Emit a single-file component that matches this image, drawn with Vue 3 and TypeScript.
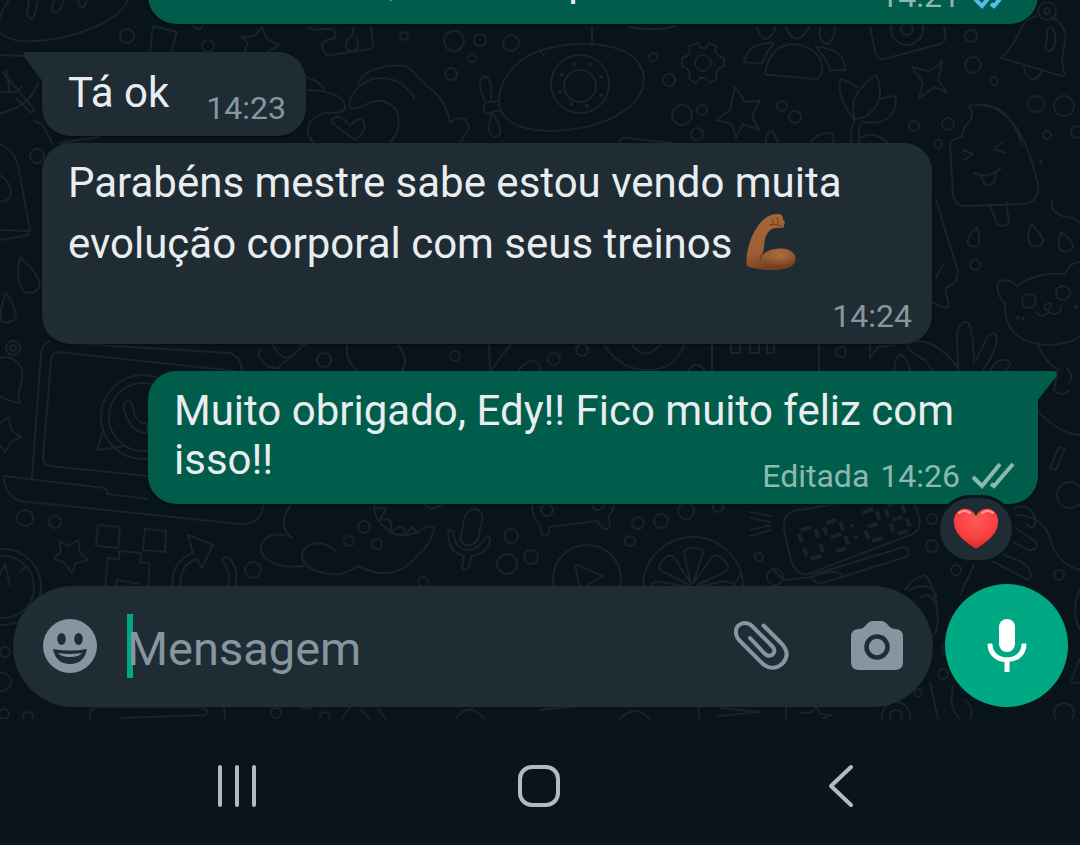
<script setup lang="ts">
import { ref } from 'vue'

const draft = ref('')

// Wallpaper bubbles: centre x, centre y, radius
const dots: [number, number, number][] = [
  [127, 36, 7], [208, 46, 6], [198, 24, 5], [404, 36, 4], [454, 41, 10], [480, 40, 6], [472, 58, 4],
  [511, 43, 8], [451, 74, 6], [580, 84, 29], [580, 86, 16], [703, 63, 8], [653, 57, 4], [669, 80, 6],
  [682, 115, 10], [702, 110, 5], [697, 134, 6], [782, 106, 5], [795, 117, 6], [914, 126, 5],
  [948, 124, 6], [938, 144, 4], [971, 36, 6], [973, 65, 8], [994, 81, 4], [1036, 104, 8],
  [1064, 106, 10], [1047, 135, 4], [1077, 132, 6], [907, 29, 16], [907, 29, 6], [1047, 11, 9],
  [1047, 11, 3], [37, 156, 7], [975, 265, 5], [1029, 301, 7], [1063, 293, 7], [841, 352, 5],
  [324, 360, 7], [455, 356, 5], [554, 359, 6], [582, 350, 6], [13, 348, 7], [13, 348, 3],
  [143, 417, 42], [143, 417, 34], [25, 518, 8], [55, 522, 6], [253, 570, 8], [364, 527, 6],
  [349, 541, 5], [377, 544, 5], [423, 582, 5], [511, 536, 7], [507, 564, 10], [531, 557, 7],
  [630, 541, 5], [638, 523, 6], [661, 521, 7], [686, 511, 8], [718, 507, 5], [547, 510, 6],
  [598, 504, 6], [587, 579, 34], [693, 587, 50], [3, 587, 38], [3, 587, 31], [759, 557, 4],
  [775, 577, 8], [932, 519, 5], [932, 546, 6], [956, 570, 5], [1059, 575, 5], [1070, 495, 13],
  [5, 652, 5], [2, 682, 9], [4, 714, 5], [28, 717, 5], [276, 713, 5], [325, 717, 5], [943, 674, 5],
  [918, 693, 4], [896, 716, 14], [896, 716, 6], [1064, 713, 10], [575, 64, 1], [591, 64, 1],
  [562, 75, 1], [601, 77, 1], [560, 92, 1], [601, 95, 1], [571, 104, 1], [587, 106, 1],
  [1018, 318, 1], [1023, 319, 1], [1076, 307, 1], [1041, 162, 1],
]

const doodles: string[] = [
  // balloon and folded shapes, top left
  'M0 33C12 43 30 43 60 38C96 30 122 16 128 0M29 0L27 14Q31 23 35 14L38 0M54 0L52 9Q55 17 60 9L64 0M78 0Q79 9 84 7L87 0M0 18Q2 9 9 0',
  'M150 53L153 26L177 32L171 53M244 53L248 43L241 37L254 36L262 27L267 39L279 45L266 53',
  'M308 27Q314 31 322 29L333 29Q336 33 335 38Q322 40 322 46Q324 57 331 55L370 49Q374 48 373 45L371 27M354 27L352 36Q343 43 347 49Q353 53 358 48L357 37',
  'M0 55L24 56M2 72L33 108Q37 113 30 112L16 98M0 92L17 92L22 86M6 70L10 92M0 113Q28 108 38 84M34 121L42 124L52 143M60 143L98 137',
  // wave and heart
  'M306 77Q320 82 324 89M308 90C335 90 347 100 345 108C342 115 330 112 325 113C308 118 303 130 313 142M358 84C362 70 385 64 405 66C415 70 420 82 430 88C442 98 448 110 450 122C462 114 470 120 468 130L460 143M414 98C405 82 390 76 372 79C358 84 345 100 351 108C360 112 370 98 382 101C400 105 405 125 390 143',
  'M355 140L343 131Q326 120 334 118Q342 114 350 126Q358 116 363 121Q368 130 355 140Z',
  // sweet with bow
  'M499 100C499 78 520 55 545 49C590 38 640 44 644 78C644 110 600 130 550 131C520 130 499 122 499 100ZM491 98Q493 80 485 76Q474 82 486 102L499 101M486 102Q480 111 487 114L500 110M492 114Q485 133 494 137Q507 135 493 114M592 27L592 42M540 50L544 56M630 27Q655 32 675 26',
  // cog
  'M698 43L701 48H706L709 43L716 46L715 52L719 56L724 58V66L718 69L716 74L717 79L710 83L706 78H700L696 83L689 79L690 73L687 69L682 66V58L687 56L690 52L689 46Z',
  'M735 87L745 102L760 101L752 116L759 130L743 124L736 138L732 124L716 120L730 110Z',
  // group of people
  'M757 27Q760 38 766 39Q774 36 775 27M786 27Q796 51 809 27M820 27Q818 43 828 44Q836 36 835 27M765 73Q770 44 795 44Q825 50 822 72Q820 79 815 79L770 75Q764 75 765 73ZM744 62Q748 42 774 43Q766 52 762 64ZM816 47Q845 48 845 70L830 70Q828 60 816 47Z',
  'M870 27L876 55Q878 60 884 59L940 44Q948 42 944 27M912 67L927 71Q931 72 942 61L938 80L947 92L934 87L919 98L923 83Z',
  // tulip
  'M854 119Q835 95 841 79Q850 82 857 87M855 119Q846 95 876 75Q888 100 865 117ZM880 99Q890 95 896 97Q896 127 863 122M852 143Q849 128 856 119M860 143Q857 130 862 122M860 138Q875 130 888 143M619 143Q620 137 628 138L672 143M766 143Q766 130 773 131L778 143M810 143Q820 130 833 134Q835 138 832 143',
  // bell
  'M1036 16C1018 20 1022 40 1001 58L1062 76Q1066 76 1064 72C1058 50 1070 42 1064 30Q1060 20 1052 18M1024 67Q1025 78 1033 79Q1040 78 1041 71M1047 30Q1052 24 1055 34Q1056 50 1049 51Q1043 50 1047 40Z',
  // ice lolly
  'M968 106Q985 103 1000 110C1018 122 1030 150 1038 185Q1040 200 1025 204L965 206Q955 206 953 195L950 143Q954 138 962 137Q962 128 970 121Q975 112 968 106M990 204L996 222Q1003 230 1009 222L1006 202M985 104Q1014 114 1022 145M963 150L973 154L964 160M1003 142L994 149L1005 153M974 173Q988 180 1001 168M981 176Q984 188 992 184Q998 178 994 172',
  'M936 200L957 268Q960 280 950 286Q944 288 946 292L949 306Q947 311 932 302M943 264L936 278M977 227Q964 240 969 245Q975 249 979 244Q980 238 977 227ZM1031 224Q1025 240 1032 246Q1041 248 1043 241Q1042 234 1031 224ZM1061 232Q1056 246 1062 251Q1071 253 1073 246Q1072 240 1061 232ZM1053 200Q1048 210 1062 216Q1072 216 1080 223',
  // cat
  'M1005 304C998 298 995 283 1000 281Q1010 278 1017 286Q1035 272 1065 274Q1070 262 1080 262M1005 302C1003 330 1020 345 1050 345Q1070 344 1080 336M1044 306Q1048 302 1052 304Q1051 310 1046 310ZM1036 312Q1042 320 1048 312Q1060 318 1061 306M1038 346Q1045 362 1058 370L1054 390Q1062 398 1070 390M1067 368Q1074 376 1069 383',
  // hand
  'M957 367C945 350 925 335 908 344Q905 350 925 360L933 371M958 370L957 335Q960 320 967 322Q973 325 974 363M976 360L988 336Q995 330 997 338Q996 352 983 370M990 370Q1000 355 1010 362Q1011 366 1005 371M894 371Q895 355 901 355Q908 357 910 371M870 344L870 358L878 347L895 345',
  'M0 144Q14 150 18 165L30 230Q30 235 24 236L0 240M0 230L29 231M0 175Q14 185 10 197Q5 203 0 201M20 257Q15 280 24 292Q35 295 40 286Q40 275 20 257ZM6 293Q-2 312 2 321Q10 325 16 317Q16 308 6 293Z',
  'M731 344V353H740V344M750 344V353H759V344M767 344V353H774V344M712 344V371M819 344V371M347 345Q345 362 358 371M398 345Q410 358 402 371M489 345L490 372L510 345M518 371Q536 350 541 371M604 345Q620 370 648 370Q675 370 684 345M632 345Q645 362 660 345M688 371Q696 358 705 371M260 350L258 355Q266 370 278 368L304 345M273 345Q278 358 290 358M300 345L308 344',
  // laptop
  'M32 478L41 354Q42 344 50 341M66 343L230 353Q242 358 242 371M235 371L58 352Q52 352 51 360L43 458Q43 465 50 466L148 476M4 476L105 488L108 494L148 499M4 476Q4 495 20 501L240 524Q262 525 263 505M103 430L97 450L124 446',
  'M130 400Q120 402 126 416Q134 434 147 433L147 424L140 422Q133 416 134 410Z',
  'M0 358Q15 354 22 370C24 385 15 390 20 403Q10 402 0 396M0 424L8 417L12 431L21 437L11 442L5 452L0 445',
  'M78 540L80 553L88 560L76 563L72 573L64 562L54 559L61 551L59 541L69 546ZM98 525L120 527L118 548L96 546ZM145 529L166 531L165 552L143 550ZM105 587L108 558L119 559L119 551L141 553L140 562L150 564L148 587M116 587L117 580L139 584M173 587C170 570 180 557 193 553L188 535L213 545L202 568L197 559Q180 564 180 587M222 560Q226 554 231 560Q239 572 235 587M222 560Q231 572 228 587M20 572L27 566M0 575L5 564L10 585',
  // cloud and crocodile
  'M291 505C283 515 280 530 292 538M285 535C265 532 255 545 265 558C275 566 290 568 304 566M336 552C328 540 305 540 302 555C302 570 325 575 340 574Q355 570 358 566C385 580 405 572 418 555Q430 545 434 530Q433 524 424 528C410 538 395 537 387 529C378 523 374 515 374 505M376 508L386 509L380 520L388 519Q393 524 391 532L400 526Q407 530 405 536L412 527L418 533M425 505L431 509L443 505',
  // microphone
  'M464 520Q467 508 476 509Q484 512 482 520L478 539Q473 547 465 545Q459 541 461 535ZM453 531Q446 526 449 540Q451 553 464 556L462 568Q466 572 469 567L471 556Q486 554 490 541Q490 533 484 539Q477 551 467 550Q454 548 453 531',
  'M532 505Q533 520 540 525Q540 535 546 536Q550 533 549 527L598 521Q602 530 608 529Q612 522 608 517Q614 510 614 505M575 564L603 576L580 589Z',
  // citrus slice
  'M691 584L684 553Q684 548 693 548Q703 548 703 553L693 584L712 557Q718 552 728 565Q730 571 721 574L697 585M689 585L662 571Q656 568 664 559Q670 552 675 559L690 582M650 587Q652 580 662 582L688 587M735 587Q730 579 720 582L698 587',
  // alarm clock
  'M794 511L900 493Q914 492 920 521Q920 532 910 535L808 574Q796 576 791 560L784 530Q782 515 794 511ZM812 575L904 547Q913 551 906 557L822 583Q812 583 812 575',
  'M750 512L771 516M751 518L770 522M750 530L771 525M750 536L771 530',
  'M1038 412Q1060 434 1080 435M1059 447L1065 449L1056 470L1050 468ZM1016 515C1035 515 1048 525 1052 545Q1060 565 1080 570M1015 508Q1030 502 1036 520Q1034 532 1026 524M1016 528L1036 542Q1040 550 1028 550L1010 540M990 560L1028 580Q1036 574 1022 562L1000 553',
  'M905 590Q912 578 925 575Q935 585 937 610Q940 628 932 638M910 590Q928 580 937 596M920 598Q930 590 937 606M774 571L784 580L812 577Q835 568 842 575M740 575L733 587M960 595L974 565M1080 590Q1070 610 1080 630M952 640Q940 640 943 655M1080 658L1072 678Q1070 686 1080 682M953 686Q948 710 960 719M930 683L938 719M965 700Q975 708 970 719',
  'M90 719Q88 708 98 707L200 707Q210 709 206 715L120 718M224 707L225 719M302 707L308 709L313 706M342 719L350 707M360 709L370 719M378 709L386 719M700 719L698 707M720 708L760 712L718 716M786 719V707M800 713L812 712L816 706L820 714L832 715L822 719M455 719Q470 700 484 719M540 710L580 706M620 719Q635 703 650 719',
]

// Seven-segment strokes of the alarm clock's display
const bars: Record<string, string> = {
  a: 'M3 0H14', b: 'M17 3V12', c: 'M17 18V27', d: 'M3 30H14', e: 'M0 18V27', f: 'M0 3V12', g: 'M3 15H14',
}
const shapes = ['abcdef', 'abcdfg', 'abged', 'abcdefg']
const display = shapes.map((s, i) => ({
  d: [...s].map((k) => bars[k]).join(''),
  x: [0, 26, 64, 90][i],
}))
</script>

<template>
  <div class="screen">
    <main class="chat">
      <svg class="wallpaper" viewBox="0 0 1080 719" preserveAspectRatio="xMidYMax slice" aria-hidden="true">
        <path v-for="(d, i) in doodles" :key="i" :d="d" />
        <circle v-for="([x, y, r], i) in dots" :key="`c${i}`" :cx="x" :cy="y" :r="r" />
        <g class="segments" transform="translate(798 531) rotate(-16)">
          <path v-for="c in display" :key="c.x" :d="c.d" :transform="`translate(${c.x} 0) skewX(3)`" />
          <path d="M53 8V11M54 20V23" />
        </g>
      </svg>

      <section class="messages">
        <article class="bubble sent clipped">
          <p class="line"><span>,</span><span>p</span></p>
          <footer class="meta">
            <time>14:21</time>
            <svg class="ticks read" viewBox="0 0 44 28" aria-label="Lida"><path d="M2 15L11 24L29 2M20 22L23 24L42 2" /></svg>
          </footer>
        </article>

        <article class="bubble received tail short">
          <svg class="corner" viewBox="0 0 20 30" aria-hidden="true"><path d="M3 0H20V30L1 5Q-1 0 3 0Z" /></svg>
          <p>Tá ok</p>
          <footer class="meta"><time>14:23</time></footer>
        </article>

        <article class="bubble received long">
          <p>
            Parabéns mestre sabe estou vendo muita evolução corporal com seus treinos
            <svg class="arm" viewBox="0 0 52 59" role="img" aria-label="Bíceps flexionado">
              <defs>
                <linearGradient id="skin" x1="0" y1="0" x2="0.3" y2="1">
                  <stop offset="0" stop-color="#a8683a" />
                  <stop offset="0.7" stop-color="#9c5d33" />
                  <stop offset="1" stop-color="#74401f" />
                </linearGradient>
                <radialGradient id="muscle" cx="0.55" cy="0.35" r="0.6">
                  <stop offset="0" stop-color="#ad6d40" />
                  <stop offset="1" stop-color="#ad6d40" stop-opacity="0" />
                </radialGradient>
              </defs>
              <path fill="url(#skin)" d="M18 7C22 3 28 1 33 1C37 1 39 4 38 7C41 8 40 11 39 12C41 14 38 16 35 15C30 15 25 16 22 21C18 28 20 36 17 43C22 38 30 36 37 36C44 36 49 39 51 45C52 51 47 56 38 57C27 59 12 58 4 55Q1 54 1 50C1 36 7 20 13 13Q15 9 18 7Z" />
              <ellipse cx="34" cy="46" rx="17" ry="10" fill="url(#muscle)" />
              <path d="M27 6Q29 8 28 11M32 5Q34 7 33 11M25 12Q30 11 37 13M18 40Q15 44 15 47" fill="none" stroke="#673719" stroke-width="1" stroke-linecap="round" />
            </svg>
          </p>
          <footer class="meta"><time>14:24</time></footer>
        </article>

        <article class="bubble sent tail reply">
          <svg class="corner" viewBox="0 0 20 30" aria-hidden="true"><path d="M17 0H0V30L19 6Q21 0 17 0Z" /></svg>
          <p>Muito obrigado, Edy!! Fico muito feliz com isso!!</p>
          <footer class="meta">
            <span>Editada</span>
            <time>14:26</time>
            <svg class="ticks" viewBox="0 0 44 28" aria-label="Entregue"><path d="M2 15L11 24L29 2M20 22L23 24L42 2" /></svg>
          </footer>
          <button class="reaction" type="button" aria-label="Reação: coração">
            <svg viewBox="0 0 46 42" aria-hidden="true">
              <defs>
                <radialGradient id="heart" cx="0.5" cy="0.3" r="0.7">
                  <stop offset="0" stop-color="#ff5b58" />
                  <stop offset="0.65" stop-color="#f93f40" />
                  <stop offset="1" stop-color="#d72429" />
                </radialGradient>
              </defs>
              <path fill="url(#heart)" d="M23 8C19 1 13 0 9 1C3 3 0 9 1 16C2 26 12 34 23 41C34 34 44 26 45 16C46 9 43 3 37 1C33 0 27 1 23 8Z" />
              <path d="M6 5Q11 1 17 5M29 5Q35 1 40 5" fill="none" stroke="#ff9d92" stroke-width="2" stroke-linecap="round" />
            </svg>
          </button>
        </article>
      </section>

      <form class="composer" @submit.prevent>
        <div class="field">
          <button class="icon" type="button" aria-label="Emojis">
            <svg width="54" height="54" viewBox="0 0 54 54">
              <circle cx="27" cy="27" r="27" fill="#8696a0" />
              <ellipse cx="18.500" cy="20" rx="4.300" ry="6" fill="#1f2c34" />
              <ellipse cx="35.500" cy="20" rx="4.300" ry="6" fill="#1f2c34" />
              <path d="M10 30Q27 33 44 30Q41 45 27 45Q13 45 10 30Z" fill="#1f2c34" />
              <path d="M15 34Q27 36 39 34Q36 38 27 38Q18 38 15 34Z" fill="#8696a0" />
            </svg>
          </button>
          <label class="entry">
            <span class="caret" aria-hidden="true"></span>
            <input v-model="draft" type="text" placeholder="Mensagem" aria-label="Mensagem" />
          </label>
          <button class="icon clip" type="button" aria-label="Anexar">
            <svg width="55" height="50" viewBox="0 0 55 50">
              <path d="M29.500 4.500L48 23C54 30 54 37 48 43C42 48 35 48 29 43L5 19C1 14 1 8 4 5C8 1 14 1 18 5L38 25C41 28 41 31 39 33C36 36 33 35 30 32L16 17" fill="none" stroke="#8696a0" stroke-width="4" stroke-linecap="round" stroke-linejoin="round" />
            </svg>
          </button>
          <button class="icon" type="button" aria-label="Câmera">
            <svg width="52" height="50" viewBox="0 0 52 50">
              <path d="M8 8Q12 8 15 4Q18 0 22 0H30Q34 0 37 4Q40 8 44 8Q52 8 52 16V41Q52 49 44 49H8Q0 49 0 41V16Q0 8 8 8Z" fill="#8696a0" />
              <circle cx="26" cy="26" r="10.500" fill="none" stroke="#1f2c34" stroke-width="4.500" />
            </svg>
          </button>
        </div>
        <button class="record" type="button" aria-label="Gravar mensagem de voz">
          <svg width="40" height="54" viewBox="0 0 40 54">
            <rect x="12" y="0" width="16" height="33" rx="8" fill="#fff" />
            <path d="M3 25C3 46 37 46 37 25M20 41V53" fill="none" stroke="#fff" stroke-width="5" />
            <path d="M1 25H5M35 25H39" stroke="#fff" stroke-width="1" />
          </svg>
        </button>
      </form>
    </main>

    <nav class="system" aria-label="Navegação do sistema">
      <button type="button" aria-label="Recentes">
        <svg width="44" height="44" viewBox="0 0 44 44"><path d="M5 3V41M22 3V41M39 3V41" /></svg>
      </button>
      <button type="button" aria-label="Início">
        <svg width="44" height="44" viewBox="0 0 44 44"><rect x="3" y="3" width="38" height="38" rx="12" /></svg>
      </button>
      <button type="button" aria-label="Voltar">
        <svg width="44" height="44" viewBox="0 0 44 44"><path d="M32 3L12 22L32 41" /></svg>
      </button>
    </nav>
  </div>
</template>

<style>
body {
  margin: 0;
  background: #0b141a;
}
</style>

<style scoped>
.screen {
  display: flex;
  flex-direction: column;
  height: 100vh;
  overflow: hidden;
  font-family: Roboto, "Noto Sans", sans-serif;
  color: #e9edef;
}

button {
  display: grid;
  place-items: center;
  padding: 0;
  border: 0;
  background: none;
}

svg {
  display: block;
}

.chat {
  position: relative;
  flex: 1;
  min-height: 0;
  display: flex;
  flex-direction: column;
  justify-content: flex-end;
  overflow: hidden;
  background: #08131a;
}

.wallpaper {
  position: absolute;
  inset: 0;
  width: 100%;
  height: 100%;
  fill: none;
  stroke: #18242a;
  stroke-width: 2;
  stroke-linecap: round;
  stroke-linejoin: round;
}

.segments {
  stroke-width: 4;
  stroke-linecap: butt;
}

.messages {
  position: relative;
  display: flex;
  flex-direction: column;
  padding: 0 42px;
}

.bubble {
  position: relative;
  box-sizing: border-box;
  display: flex;
  padding: 0 20px 0 26px;
  border-radius: 28px;
  font-size: 42px;
  line-height: 49px;
  box-shadow: 0 1px 2px rgba(0, 0, 0, 0.4);
}

.bubble p {
  margin: 0;
}

.received {
  align-self: flex-start;
  background: #1f2c34;
}

.sent {
  align-self: flex-end;
  width: 890px;
  max-width: 100%;
  padding-right: 23px;
  background: #005d4b;
}

.received.tail {
  border-top-left-radius: 0;
}

.sent.tail {
  border-top-right-radius: 0;
}

.corner {
  position: absolute;
  top: 0;
  width: 20px;
  height: 30px;
}

.received .corner {
  right: 100%;
  fill: #1f2c34;
  margin-right: -1px;
}

.sent .corner {
  left: 100%;
  fill: #005d4b;
  margin-left: -1px;
}

.meta {
  display: flex;
  align-items: center;
  gap: 11px;
  margin-left: auto;
  font-size: 32px;
  line-height: 38px;
  color: #8696a0;
}

.sent .meta {
  color: #8cb8ad;
}

.ticks {
  width: 44px;
  height: 28px;
  fill: none;
  stroke: #8cb8ad;
  stroke-width: 4;
}

.ticks.read {
  stroke: #53bdeb;
}

.clipped {
  align-items: flex-end;
  padding-bottom: 9px;
}

.clipped .line {
  display: flex;
  gap: 172px;
  padding: 0 0 10px 214px;
}

.short {
  margin-top: 28px;
  padding-top: 16px;
  padding-bottom: 9px;
  gap: 37px;
  align-items: flex-end;
}

.short p {
  padding-bottom: 10px;
}

.long {
  flex-direction: column;
  width: 890px;
  max-width: 100%;
  margin-top: 7px;
  padding-top: 10px;
  padding-bottom: 9px;
}

.long p {
  padding-bottom: 23px;
  line-height: 60px;
}

.arm {
  display: inline-block;
  width: 52px;
  height: 58px;
  margin-left: 2px;
  vertical-align: -13px;
}

.reply {
  display: flow-root;
  margin-top: 27px;
  padding-top: 15px;
  padding-bottom: 9px;
}

.reply p {
  display: inline;
}

.reply .meta {
  float: right;
  padding-top: 22px;
}

.reaction {
  position: absolute;
  right: 23px;
  bottom: -59px;
  width: 78px;
  height: 68px;
  border: 3px solid #08131a;
  border-radius: 34px;
  background: #1f2c34;
}

.reaction svg {
  width: 46px;
  height: 42px;
}

.composer {
  position: relative;
  display: flex;
  align-items: flex-end;
  gap: 12px;
  padding: 80px 12px 12px 13px;
}

.field {
  flex: 1;
  min-width: 0;
  box-sizing: border-box;
  height: 121px;
  display: flex;
  align-items: center;
  padding: 0 30px 2px;
  border-radius: 61px;
  background: #1f2c34;
}

.icon {
  flex: none;
}

.entry {
  position: relative;
  flex: 1;
  min-width: 0;
  height: 64px;
  margin-left: 30px;
}

.caret {
  position: absolute;
  left: 0;
  top: 0;
  width: 6px;
  height: 64px;
  background: #00a884;
}

.entry input {
  position: relative;
  box-sizing: border-box;
  width: 100%;
  height: 64px;
  padding: 5px 0 0;
  border: 0;
  outline: 0;
  background: none;
  color: #e9edef;
  font: 47px Roboto, "Noto Sans", sans-serif;
}

.entry input::placeholder {
  color: #8696a0;
  opacity: 1;
}

.clip {
  margin-right: 62px;
}

.record {
  flex: none;
  width: 123px;
  height: 123px;
  border-radius: 50%;
  background: #00a884;
}

.system {
  flex: none;
  display: flex;
  height: 126px;
  padding: 8px 88px 0 86px;
  box-sizing: border-box;
  background: #0b141a;
}

.system button {
  flex: 1;
}

.system svg {
  fill: none;
  stroke: #b6babd;
  stroke-width: 4;
  stroke-linecap: round;
  stroke-linejoin: round;
}
</style>
